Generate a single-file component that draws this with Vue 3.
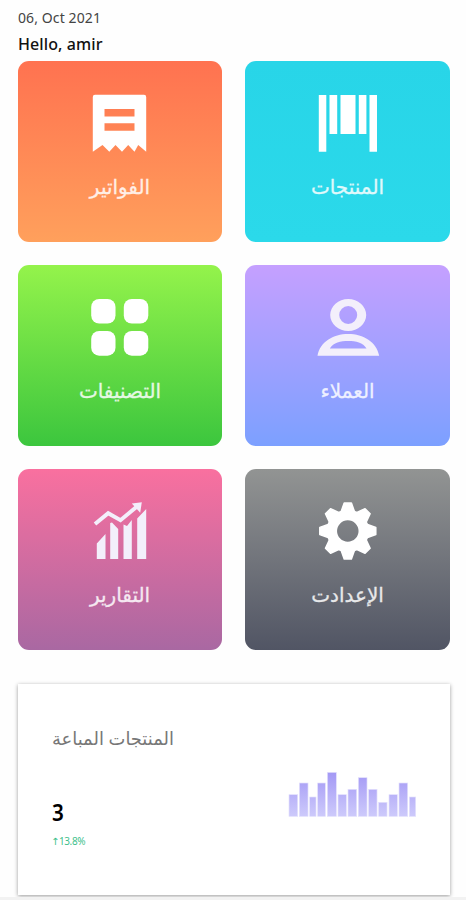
<template>
  <div class="dashboard">
    <header class="greeting">
      <div class="date">06, Oct 2021</div>
      <div class="hello">Hello, amir</div>
    </header>

    <nav class="tiles">
      <a v-for="tile in tiles" :key="tile.name" class="tile" :class="`tile-${tile.name}`">
        <svg class="tile-icon" viewBox="0 0 70 64">
          <path v-if="tile.path" :d="tile.path" fill-rule="evenodd" />
          <g v-if="tile.name === 'categories'">
            <rect x="6.2" y="3" width="24.3" height="24.6" rx="8" />
            <rect x="38.8" y="3" width="24.5" height="24.6" rx="8" />
            <rect x="6.2" y="35" width="24.3" height="24.7" rx="8" />
            <rect x="38.8" y="35" width="24.5" height="24.7" rx="8" />
          </g>
          <g v-if="tile.name === 'reports'">
            <path d="M10 24 L23.2 13.2 L35.5 20.2 L52 6.5" class="trend" />
            <path d="M46.8 3.5 L56.8 2.3 L55.2 12.7 Z" />
          </g>
          <g v-if="tile.name === 'settings'" class="gear" transform="translate(34.8 31)">
            <circle r="16" class="gear-ring" />
            <path
              v-for="n in 8"
              :key="n"
              d="M-6.8 -19 L-3.6 -28 H3.6 L6.8 -19 Z"
              :transform="`rotate(${n * 45})`"
            />
          </g>
        </svg>
        <span class="tile-label" dir="rtl">{{ tile.label }}</span>
      </a>
    </nav>

    <section class="card">
      <div class="card-info">
        <h3 class="card-title" dir="rtl">المنتجات المباعة</h3>
        <div class="card-value">3</div>
        <div class="card-change">↑13.8%</div>
      </div>
      <svg class="chart" viewBox="26 32 386 138">
        <defs>
          <linearGradient id="bars" gradientUnits="userSpaceOnUse" x1="0" y1="35" x2="0" y2="168">
            <stop offset="0" stop-color="#a398f5" />
            <stop offset="1" stop-color="#cdcafb" />
          </linearGradient>
        </defs>
        <rect
          v-for="bar in bars"
          :key="bar[0]"
          :x="bar[0]"
          :y="bar[2]"
          :width="bar[1]"
          :height="168 - bar[2]"
          fill="url(#bars)"
          stroke="#e3e0fc"
          stroke-width="2"
        />
      </svg>
    </section>
    <div class="bottom-line"></div>
  </div>
</template>

<script setup>
const tiles = [
  {
    name: 'invoices',
    label: 'الفواتير',
    path: 'M10 2.8 H59 Q61.2 2.8 61.2 5 V59.7 L53.2 53 L49.5 59.7 L43.2 53 L37 59.7 L30.5 53 L24.3 59.7 L17.5 53 L7.8 59.7 V5 Q7.8 2.8 10 2.8 Z M19.5 17 V24.6 H49.5 V17 Z M19.5 31.3 V38.7 H49.5 V31.3 Z'
  },
  {
    name: 'products',
    label: 'المنتجات',
    path: 'M5.8 3 H13.3 V59.8 H5.8 Z M16.5 3 H24.2 V42 H16.5 Z M27.5 3 H42.5 V42 H27.5 Z M45.8 3 H53.4 V42 H45.8 Z M56.5 3 H64 V59.8 H56.5 Z'
  },
  { name: 'categories', label: 'التصنيفات' },
  {
    name: 'customers',
    label: 'العملاء',
    path: 'M35.2 3 A18 16 0 0 1 35.2 35 A18 16 0 0 1 35.2 3 Z M35.2 10 A9 9 0 0 0 35.2 28 A9 9 0 0 0 35.2 10 Z M4.5 59.7 C7 46 20 38 35.2 38 C50.5 38 63.5 46 66.2 59.7 Z M16.8 52.4 H53.5 C50 46.5 43 45 35.2 45 C27.5 45 20.5 46.5 16.8 52.4 Z'
  },
  {
    name: 'reports',
    label: 'التقارير',
    path: 'M11.8 59 V43.5 L20.5 34 V59 Z M25.2 59 V23 L27 22.5 L33.2 29 V59 Z M38.5 59 V24.5 L42 26 L46.8 20 V59 Z M52.2 59 V18.5 L61.2 9 V59 Z'
  },
  { name: 'settings', label: 'الإعدادت' }
]

// x, width, top
const bars = [
  [29, 26, 103],
  [60, 26, 68],
  [91, 19, 110],
  [115, 23, 68],
  [144, 27, 36],
  [176, 25, 103],
  [206, 26, 87],
  [237, 26, 52],
  [268, 25, 87],
  [298, 25, 126],
  [329, 25, 103],
  [359, 26, 68],
  [390, 19, 110]
]
</script>

<style>
body {
  margin: 0;
  background: #fefefe;
}
</style>

<style scoped>
.dashboard {
  box-sizing: border-box;
  width: 466px;
  height: 900px;
  padding: 8px 16px 0 18px;
  overflow: hidden;
  display: flex;
  flex-direction: column;
  font-family: 'Noto Sans', 'DejaVu Sans', sans-serif;
}

.greeting {
  height: 53px;
  color: #111;
}

.date {
  height: 23px;
  font-size: 14px;
  line-height: 20px;
  color: #444;
  letter-spacing: 0.1px;
}

.hello {
  font-size: 16px;
  line-height: 26px;
  font-weight: 500;
  letter-spacing: 0.1px;
}

.tiles {
  display: grid;
  grid-template-columns: 204px 205px;
  grid-auto-rows: 181px;
  gap: 23px;
}

.tile {
  display: flex;
  flex-direction: column;
  align-items: center;
  border-radius: 11px;
  color: #fff;
}

.tile-icon {
  width: 70px;
  height: 64px;
  margin-top: 31px;
  fill: #fff;
}

.tile-label {
  margin-top: 19px;
  font-size: 20px;
  line-height: 24px;
  opacity: 0.85;
  -webkit-text-stroke: 0.3px #fff;
}

.tile-invoices {
  background: linear-gradient(#ff7250, #ffa05c);
}

.tile-products {
  background: linear-gradient(#28d5e8, #2bd9ea);
}

.tile-categories {
  background: linear-gradient(#94f34b, #3cc63e);
}

.tile-customers {
  background: linear-gradient(#c5a0ff, #7ca0ff);
}

.tile-reports {
  background: linear-gradient(#f9709f, #a968a2);
}

.tile-settings {
  background: linear-gradient(#929493, #515564);
}

.tile-customers .tile-icon,
.tile-reports .tile-icon {
  fill: #f3effb;
}

.trend {
  fill: none;
  stroke: #f3effb;
  stroke-width: 4;
}

.gear path {
  stroke: #fff;
  stroke-width: 1.5;
  stroke-linejoin: round;
}

.gear-ring {
  fill: none;
  stroke: #fff;
  stroke-width: 10.5;
}

.card {
  display: flex;
  justify-content: space-between;
  box-sizing: border-box;
  width: 432px;
  height: 211px;
  margin-top: 34px;
  padding: 0 33px 0 34px;
  background: #fff;
  box-shadow: 0 1px 4px rgba(0, 0, 0, 0.4);
  flex-shrink: 0;
}

.card-title {
  margin: 42px 0 0;
  font-size: 17.9px;
  line-height: 24px;
  font-weight: 400;
  color: #777;
}

.card-value {
  margin-top: 46px;
  font-size: 24px;
  line-height: 32px;
  font-weight: 600;
  color: #000;
  transform: scaleX(0.86);
  transform-origin: left;
}

.card-change {
  margin-top: 5px;
  margin-left: -1px;
  font-size: 10px;
  line-height: 16px;
  letter-spacing: -0.4px;
  color: #3fbf8c;
}

.chart {
  width: 128.7px;
  height: 46px;
  margin-top: 86.5px;
}

.bottom-line {
  height: 3px;
  margin: 2px -16px 0 -18px;
  background: #f2f2f2;
}
</style>
